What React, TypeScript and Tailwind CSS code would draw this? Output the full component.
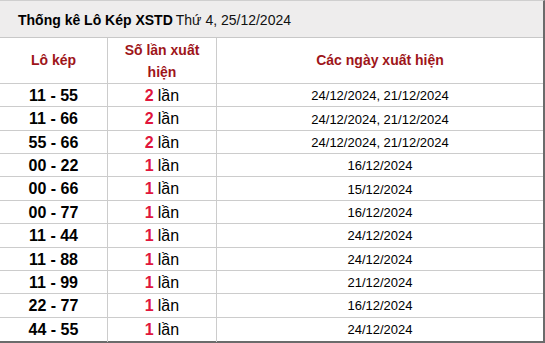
import React from 'react';

interface Row {
  pair: string;
  count: number;
  dates: string;
}

const rows: Row[] = [
  { pair: '11 - 55', count: 2, dates: '24/12/2024, 21/12/2024' },
  { pair: '11 - 66', count: 2, dates: '24/12/2024, 21/12/2024' },
  { pair: '55 - 66', count: 2, dates: '24/12/2024, 21/12/2024' },
  { pair: '00 - 22', count: 1, dates: '16/12/2024' },
  { pair: '00 - 66', count: 1, dates: '15/12/2024' },
  { pair: '00 - 77', count: 1, dates: '16/12/2024' },
  { pair: '11 - 44', count: 1, dates: '24/12/2024' },
  { pair: '11 - 88', count: 1, dates: '24/12/2024' },
  { pair: '11 - 99', count: 1, dates: '21/12/2024' },
  { pair: '22 - 77', count: 1, dates: '16/12/2024' },
  { pair: '44 - 55', count: 1, dates: '24/12/2024' },
];

export default function App() {
  return (
    <div className="w-[545px] h-[343px] bg-white font-['Liberation_Sans',Arial,sans-serif] text-black overflow-hidden">
      <div className="w-[545px] border-t border-[#cfcfcf] border-r-2 border-b-2 border-r-[#6b6b6b] border-b-[#6b6b6b]">
        {/* tiêu đề */}
        <div className="h-[37px] bg-[#eeeded] border-b border-[#c8c8c8] flex items-center pl-[18px] text-[14px] pt-[2px]">
          <span className="font-bold">Thống kê Lô Kép XSTD</span>
          <span className="ml-[3px] text-[#111]">Thứ 4, 25/12/2024</span>
        </div>

        {/* đầu cột */}
        <div className="grid grid-cols-[108px_109px_1fr] h-[46px] border-b border-[#cccccc] text-[14px] font-bold text-[#9e1519]">
          <div className="border-r border-[#cccccc] flex items-center justify-center">Lô kép</div>
          <div className="border-r border-[#cccccc] flex items-center justify-center text-center px-[8px] leading-[22px]">
            Số lần xuất hiện
          </div>
          <div className="flex items-center justify-center">Các ngày xuất hiện</div>
        </div>

        {rows.map((r, i) => (
          <div
            key={r.pair}
            className={
              'grid grid-cols-[108px_109px_1fr] h-[23.36px] ' +
              (i < rows.length - 1 ? 'border-b border-[#cccccc]' : '')
            }
          >
            <div className="border-r border-[#cccccc] flex items-center justify-center font-bold text-[16px]">
              {r.pair}
            </div>
            <div className="border-r border-[#cccccc] flex items-center justify-center text-[16px]">
              <span className="font-bold text-[#e0163c]">{r.count}</span>
              <span className="ml-[4px]">lần</span>
            </div>
            <div className="flex items-center justify-center text-[13px]">{r.dates}</div>
          </div>
        ))}
      </div>
    </div>
  );
}
